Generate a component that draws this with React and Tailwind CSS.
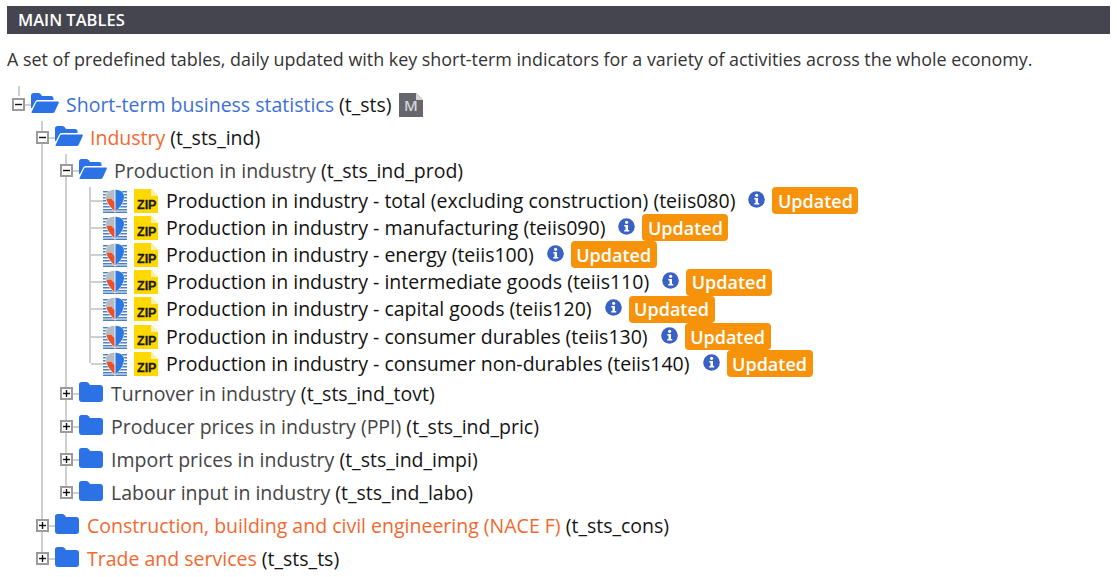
const ITEMS = [
  { label: 'total (excluding construction)', code: 'teiis080' },
  { label: 'manufacturing', code: 'teiis090' },
  { label: 'energy', code: 'teiis100' },
  { label: 'intermediate goods', code: 'teiis110' },
  { label: 'capital goods', code: 'teiis120' },
  { label: 'consumer durables', code: 'teiis130' },
  { label: 'consumer non-durables', code: 'teiis140' },
];

const SUB_FOLDERS = [
  { label: 'Turnover in industry', code: 't_sts_ind_tovt' },
  { label: 'Producer prices in industry (PPI)', code: 't_sts_ind_pric' },
  { label: 'Import prices in industry', code: 't_sts_ind_impi' },
  { label: 'Labour input in industry', code: 't_sts_ind_labo' },
];

const Expander = ({ open }) => (
  <svg width="13" height="13" viewBox="0 0 13 13" className="relative shrink-0 bg-white">
    <rect x="1" y="1" width="11" height="11" fill="#fff" stroke="#9b9b9b" strokeWidth="2" />
    <rect x="3" y="5.8" width="7" height="1.4" fill="#111" />
    {!open && <rect x="5.8" y="3" width="1.4" height="7" fill="#111" />}
  </svg>
);

const OpenFolder = () => (
  <svg width="28" height="20" viewBox="0 0 28 20" className="shrink-0 -mt-[3px]">
    <path d="M0 2.5Q0 0 2.5 0H7.5Q9 0 10 1.5L11 3H20Q22.5 3 22.5 5.5V7H6.5Q5 7 4.3 8.5L1 15H0Z" fill="#2b72e6" />
    <path d="M6.8 8.6H27Q28.4 8.6 27.7 10L23.8 18.5Q23.1 20 21.5 20H1.2Q0.2 20 0.7 18.8L5 9.8Q5.5 8.6 6.8 8.6Z" fill="#2b72e6" />
  </svg>
);

const ClosedFolder = () => (
  <svg width="24" height="20" viewBox="0 0 24 20" className="shrink-0 -mt-[3px]">
    <path d="M0 2.5Q0 0 2.5 0H7.5Q9 0 10 1.5L11 3H21Q24 3 24 6V17Q24 20 21 20H3Q0 20 0 17Z" fill="#2b72e6" />
  </svg>
);

const MapIcon = () => (
  <svg width="24" height="24" viewBox="0 0 24 24" className="shrink-0">
    {[3, 6, 9, 12, 15, 18, 21, 23.5].map((y) => (
      <rect key={y} x="0" y={y - 1} width="24" height="1.5" fill="#4a80c0" />
    ))}
    <path d="M12 23.8C8 19.5 2.5 14 2.5 7.5C2.5 3 7 0.2 12 0.2C17 0.2 21.5 3 21.5 7.5C21.5 14 16 19.5 12 23.8Z" fill="#f4f4f4" />
    <path d="M11.5 0.8C7 1 3 3.2 3 7.5C3 8.5 3.1 9.2 3.3 10L8 9.5L11.5 13Z" fill="#b4bcc2" />
    <path d="M3.3 10L8 9.5L11.5 13V22.6C8.5 19 4.5 15 3.3 10Z" fill="#e8512a" />
    <path d="M12.5 0.8C17 1 21 3.2 21 7.5C21 14 16 19 12.5 22.6Z" fill="#2b78e4" />
  </svg>
);

const ZipIcon = () => (
  <svg width="24" height="24" viewBox="0 0 24 24" className="shrink-0">
    <path d="M0 0H17L24 7V24H0Z" fill="#ffd800" />
    <path d="M17 0L24 7H17Z" fill="#fdf0a8" />
    <text x="3" y="20" fontFamily="'Liberation Sans', sans-serif" fontWeight="700" fontSize="12.5" stroke="#1c1c1c" strokeWidth="0.3" fill="#1c1c1c">
      ZIP
    </text>
  </svg>
);

const MetaIcon = () => (
  <svg width="24" height="24" viewBox="0 0 24 24" className="shrink-0">
    <path d="M0 0H17L24 7V24H0Z" fill="#66666c" />
    <path d="M17 0L24 7H17Z" fill="#d8d8da" />
    <text x="12" y="18" textAnchor="middle" fontFamily="'Open Sans', sans-serif" fontWeight="600" fontSize="15" fill="#d4d4d6">
      M
    </text>
  </svg>
);

const InfoIcon = () => (
  <svg width="17" height="17" viewBox="0 0 17 17" className="shrink-0">
    <circle cx="8.5" cy="8.5" r="8.3" fill="#3a62c4" />
    <circle cx="8.6" cy="4.3" r="1.6" fill="#fff" />
    <path d="M6.3 7H10V12H11.2V13.6H6.3V12H7.5V8.6H6.3Z" fill="#fff" />
  </svg>
);

// a branch of the tree: one folder row, the lines are drawn by the wrapping blocks
const FolderRow = ({ open, label, code, color, extra }) => (
  <div className="flex h-[33px] items-center">
    <Expander open={open} />
    <span className="h-0.5 w-[6px] shrink-0 bg-[#cfcfcf]" />
    {open ? <OpenFolder /> : <ClosedFolder />}
    <span className={`${open ? 'ml-[7px]' : 'ml-[8px]'} whitespace-nowrap text-[#151515]`}>
      <span className={color}>{label}</span> ({code})
    </span>
    {extra}
  </div>
);

const ItemRow = ({ label, code }) => (
  <li className="flex h-[27.2px] items-center">
    <span className="h-0.5 w-[12px] shrink-0 bg-[#cfcfcf]" />
    <MapIcon />
    <span className="w-[7px] shrink-0" />
    <ZipIcon />
    <span className="ml-2 whitespace-nowrap text-[#111]">
      Production in industry - {label} ({code})
    </span>
    <span className="ml-[13px] -mt-[3px]">
      <InfoIcon />
    </span>
    <span className="relative ml-[7px] flex h-[27px] w-[86px] shrink-0 items-center justify-center rounded-[4px] bg-[#f7930a] text-[18px] font-semibold text-white">
      Updated
    </span>
  </li>
);

export default function App() {
  return (
    <div className="h-[577px] overflow-hidden bg-white px-[7px] pt-[6px] font-['Open_Sans',sans-serif] leading-[24px]">
      <h2 className="flex h-[28px] items-center bg-[#45454f] pl-[11px] text-[16.5px] font-semibold text-white">
        MAIN TABLES
      </h2>
      <p className="mt-[13px] whitespace-nowrap text-[17.9px] text-[#333]">
        A set of predefined tables, daily updated with key short-term indicators for a variety of activities across the whole economy.
      </p>

      <div className="relative mt-[17px] pl-[5px] text-[19.5px]">
        <span className="absolute left-[11px] top-[-2px] h-[10px] w-0.5 bg-[#cfcfcf]" />
        <FolderRow open label="Short-term business statistics" code="t_sts" color="text-[#3b6fd8]" extra={<span className="ml-[7px]"><MetaIcon /></span>} />

        <div className="relative pl-[24px]">
          <span className="absolute left-[29px] top-0 h-[436px] w-0.5 bg-[#cfcfcf]" />
          <FolderRow open label="Industry" code="t_sts_ind" color="text-[#f2682f]" />

          <div className="relative pl-[24px]">
            <span className="absolute left-[29px] top-0 h-[337px] w-0.5 bg-[#cfcfcf]" />
            <FolderRow open label="Production in industry" code="t_sts_ind_prod" color="text-[#444]" />

            <div className="relative pl-[31px]">
              <span className="absolute left-[29px] top-0 h-[176px] w-0.5 bg-[#cfcfcf]" />
              <ul>
                {ITEMS.map((item) => (
                  <ItemRow key={item.code} {...item} />
                ))}
              </ul>
            </div>

            {SUB_FOLDERS.map((f) => (
              <FolderRow key={f.code} label={f.label} code={f.code} color="text-[#444]" />
            ))}
          </div>

          <FolderRow label="Construction, building and civil engineering (NACE F)" code="t_sts_cons" color="text-[#f2682f]" />
          <FolderRow label="Trade and services" code="t_sts_ts" color="text-[#f2682f]" />
        </div>
      </div>
    </div>
  );
}
